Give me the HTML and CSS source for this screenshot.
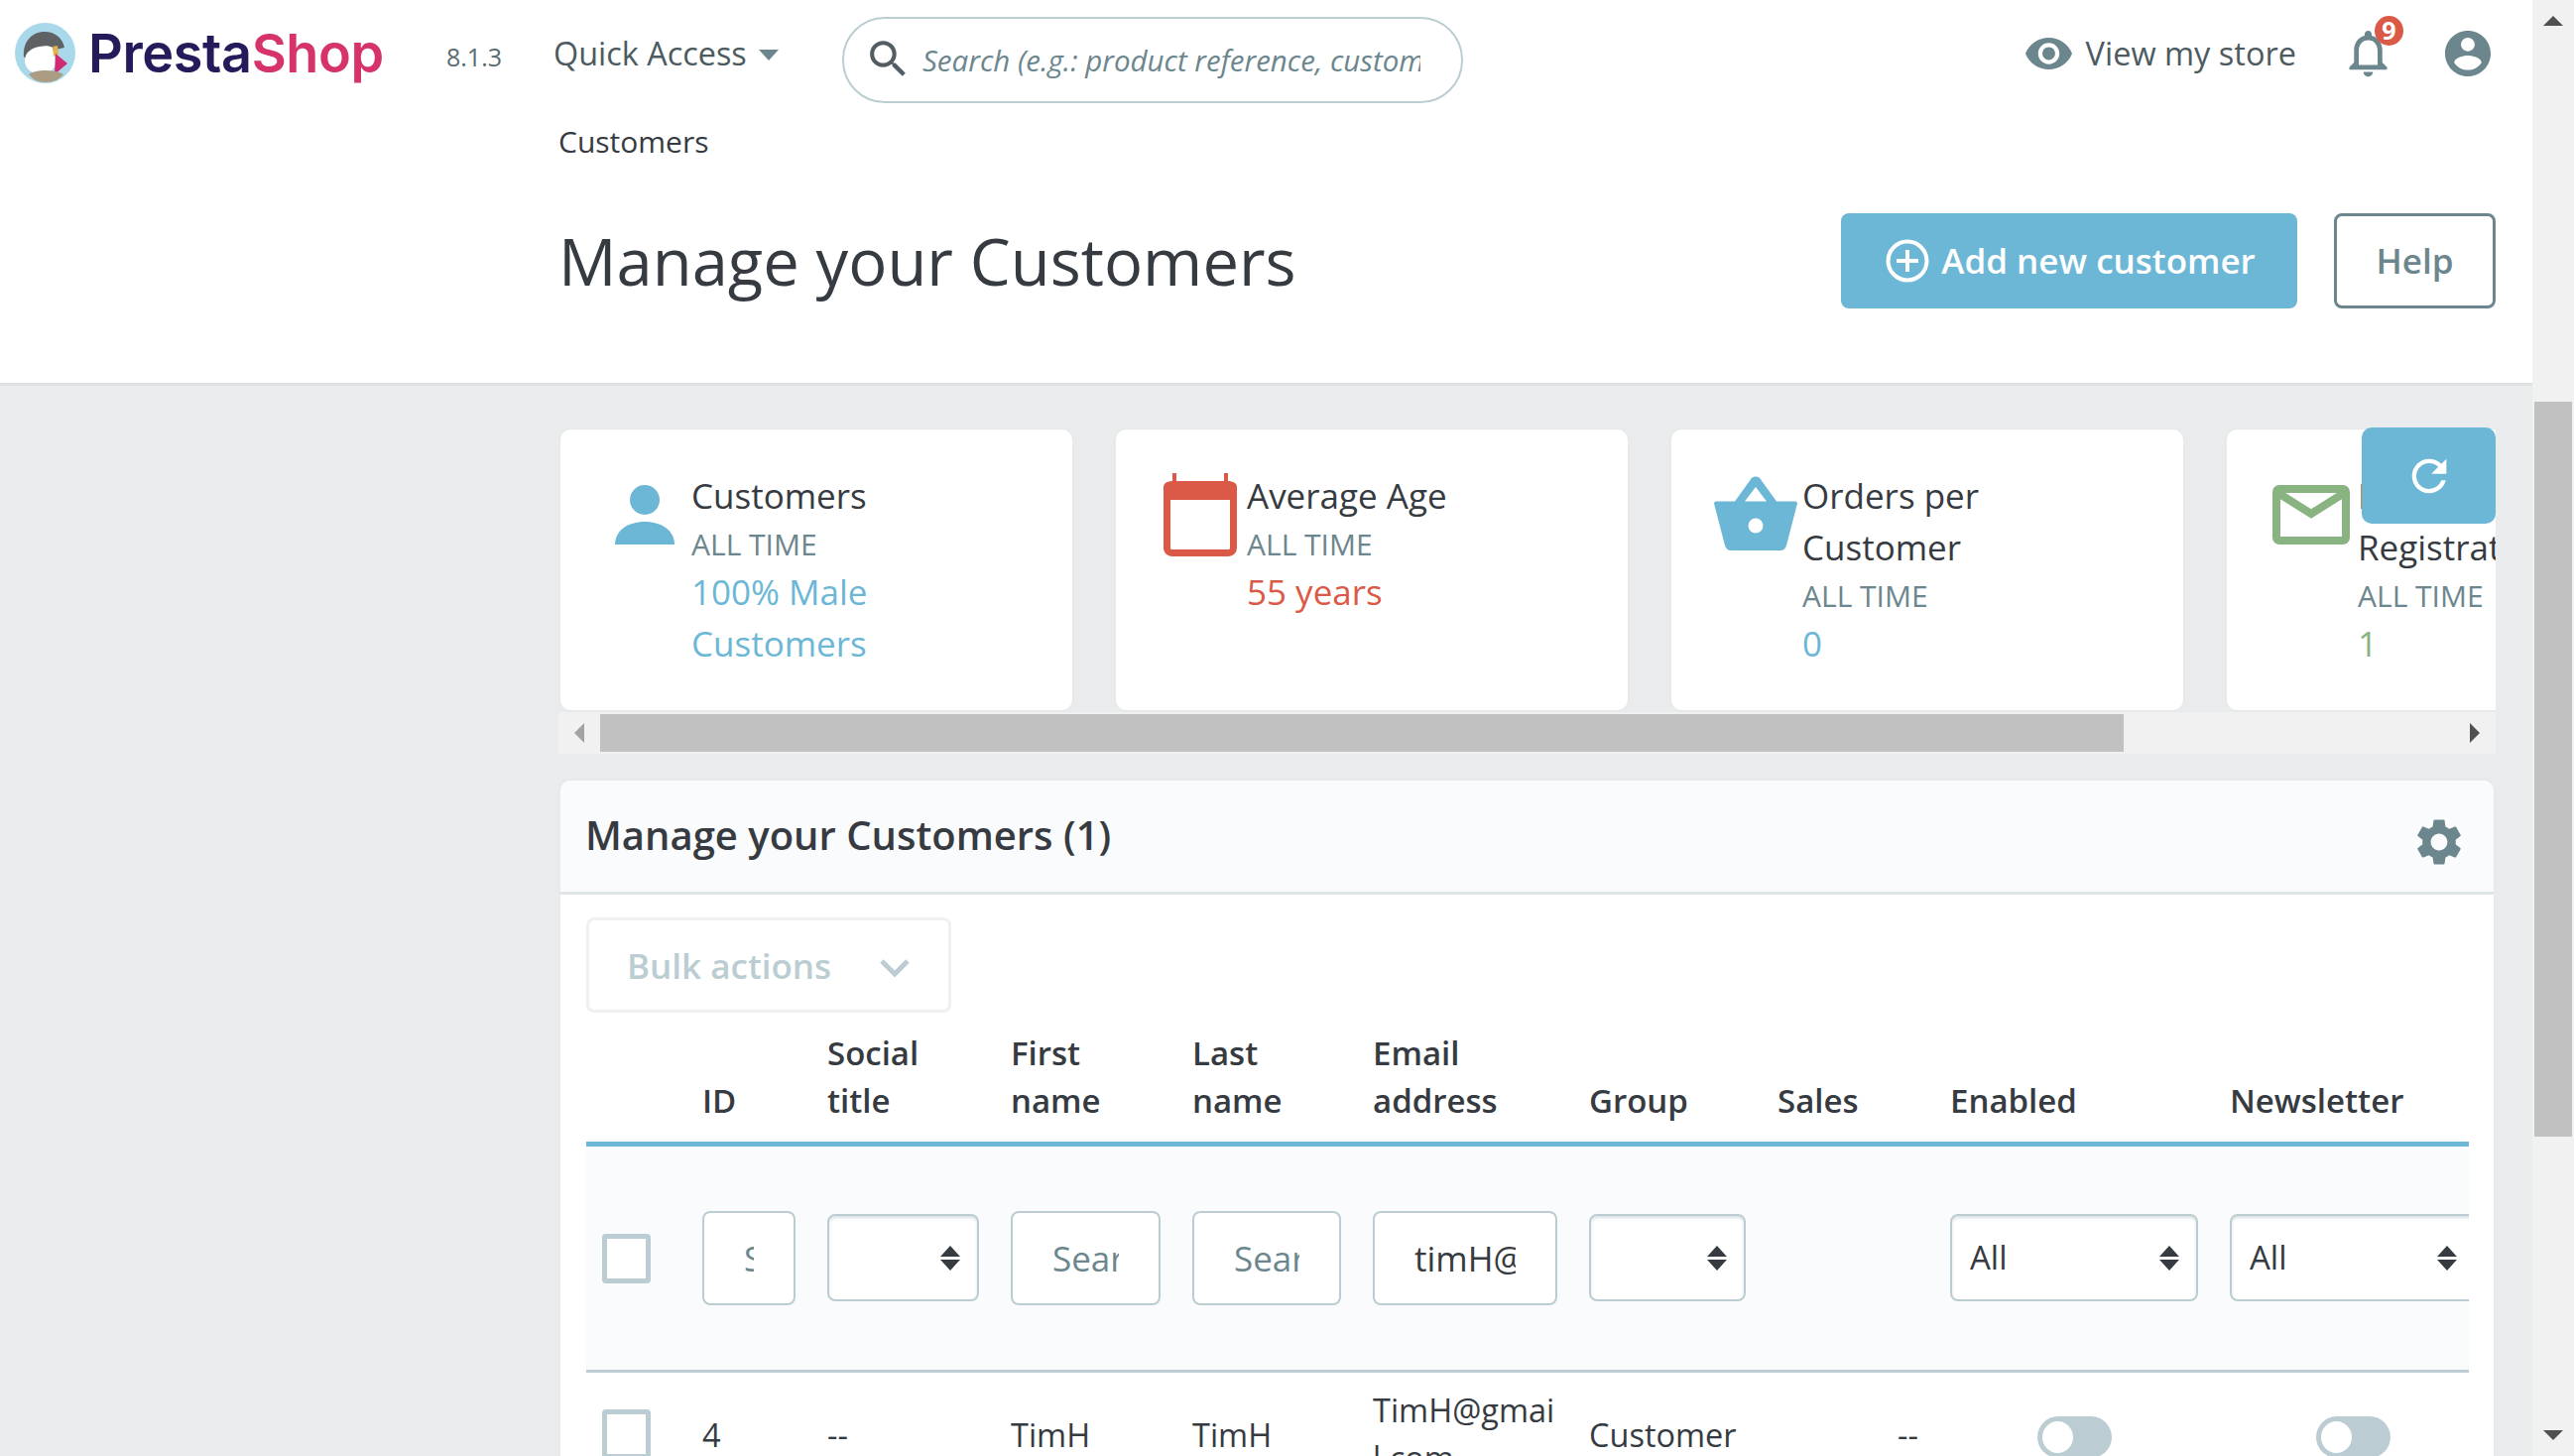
FILE: index.html
```html
<!DOCTYPE html>
<html lang="en">
<head>
<meta charset="utf-8">
<title>Manage your Customers</title>
<link rel="stylesheet" href="styles.css">
</head>
<body>
<div class="page">
  <header class="head">
    <nav class="nav">
      <a class="logo">
        <svg class="puffin" viewBox="0 0 61 61">
          <circle cx="30.500" cy="30.500" r="30.500" fill="#a8d8ea"/>
          <path d="M9 34C8 19 17 9 30 9c10 0 18 6 20 16l-9 2-9 3-12 3-8 5z" fill="#5f6265"/>
          <path d="M10 38c0-8 7-13 15-14 5-1 10-1 13 1l2 8 1 9c-3 7-8 10-14 10-10 0-17-6-17-14z" fill="#fff"/>
          <path d="M38 24l5-1 1 9-5 2z" fill="#e3b04a"/>
          <path d="M41 31l12 10-13 11z" fill="#d12a73"/>
          <path d="M14 52c4-3 10-4 17-4s13 1 18 4c-4 5-10 8-18 8s-13-3-17-8z" fill="#ab9d84"/>
        </svg>
        <span class="logo-text"><span class="presta">Presta</span><span class="shop">Shop</span></span>
      </a>
      <span class="version">8.1.3</span>
      <a class="quick">Quick Access<span class="caret"></span></a>
      <div class="search">
        <svg class="search-icon" viewBox="0 0 24 24"><path d="M15.500 14h-.79l-.28-.27A6.471 6.471 0 0 0 16 9.500 6.500 6.500 0 1 0 9.500 16c1.610 0 3.090-.59 4.230-1.570l.27.28v.79l5 4.990L20.490 19l-4.990-5zm-6 0C7.010 14 5 11.990 5 9.500S7.010 5 9.500 5 14 7.010 14 9.500 11.990 14 9.500 14z"/></svg>
        <input class="search-input" type="text" placeholder="Search (e.g.: product reference, customer name…)">
      </div>
      <div class="nav-right">
        <a class="store">
          <svg class="eye" viewBox="1 4.500 22 15" preserveAspectRatio="none"><path d="M12 4.500C7 4.500 2.730 7.610 1 12c1.730 4.390 6 7.500 11 7.500s9.270-3.110 11-7.500c-1.730-4.390-6-7.500-11-7.500zM12 17c-2.760 0-5-2.240-5-5s2.240-5 5-5 5 2.240 5 5-2.240 5-5 5zm0-8c-1.660 0-3 1.340-3 3s1.340 3 3 3 3-1.340 3-3-1.340-3-3-3z"/></svg>
          View my store
        </a>
        <div class="bell">
          <svg class="bell-icon" viewBox="0 0 24 24"><path d="M12 22c1.100 0 2-.9 2-2h-4c0 1.100.89 2 2 2zm6-6v-5c0-3.070-1.640-5.640-4.500-6.320V4c0-.83-.67-1.500-1.500-1.500s-1.500.67-1.500 1.500v.68C7.630 5.360 6 7.920 6 11v5l-2 2v1h16v-1l-2-2zm-2 1H8v-6c0-2.480 1.510-4.500 4-4.500s4 2.020 4 4.500v6z"/></svg>
          <span class="badge">9</span>
        </div>
        <svg class="user-icon" viewBox="2 2 20 20"><path d="M12 2C6.480 2 2 6.480 2 12s4.480 10 10 10 10-4.480 10-10S17.520 2 12 2zm0 3c1.660 0 3 1.340 3 3s-1.340 3-3 3-3-1.340-3-3 1.340-3 3-3zm0 14.200c-2.500 0-4.710-1.280-6-3.220.03-1.990 4-3.080 6-3.080 1.990 0 5.970 1.090 6 3.080-1.290 1.940-3.500 3.220-6 3.220z"/></svg>
      </div>
    </nav>
    <div class="crumb">Customers</div>
    <div class="title-row">
      <h1 class="title">Manage your Customers</h1>
      <div class="actions">
        <a class="btn btn-add">
          <svg class="plus" viewBox="0 0 44 44"><circle cx="22" cy="22" r="19.500" fill="none" stroke="#fff" stroke-width="4"/><path d="M22 11v22M11 22h22" stroke="#fff" stroke-width="4"/></svg>
          Add new customer
        </a>
        <a class="btn btn-help">Help</a>
      </div>
    </div>
  </header>

  <main class="main">
    <section class="stats">
      <div class="cards">
        <article class="card">
          <svg class="card-icon" viewBox="0 0 84 84"><ellipse cx="42" cy="27" rx="15" ry="15" fill="#6cb7d6"/><path d="M12 72c0-14 13-23 30-23s30 9 30 23z" fill="#6cb7d6"/></svg>
          <div class="card-text">
            <div class="card-title">Customers</div>
            <div class="card-sub">ALL TIME</div>
            <div class="card-val blue">100% Male Customers</div>
          </div>
        </article>
        <article class="card">
          <svg class="card-icon" viewBox="0 0 84 84"><path d="M14 0h4v9h-4zM66 0h4v9h-4z" fill="#da5a47"/><rect x="8.500" y="11.500" width="67" height="69" rx="5" fill="#fff" stroke="#da5a47" stroke-width="7"/><path d="M10 9h64a5 5 0 0 1 5 5v13H5V14a5 5 0 0 1 5-5z" fill="#da5a47"/></svg>
          <div class="card-text">
            <div class="card-title">Average Age</div>
            <div class="card-sub">ALL TIME</div>
            <div class="card-val red">55 years</div>
          </div>
        </article>
        <article class="card">
          <svg class="card-icon" viewBox="0 0 84 84"><path d="M0 30.500c0-1 1-2 2-2h19L36.500 7a6 6 0 0 1 11 0L63 28.500h19c1 0 2 1 2 2L73 73c-1 3-3 5-6 5H17c-3 0-5-2-6-5zM42 14 31 28.500h22z" fill="#6cb7d6"/><circle cx="42" cy="53" r="7.500" fill="#fff"/></svg>
          <div class="card-text">
            <div class="card-title">Orders per Customer</div>
            <div class="card-sub">ALL TIME</div>
            <div class="card-val blue">0</div>
          </div>
        </article>
        <article class="card">
          <svg class="card-icon" viewBox="0 0 84 84"><rect x="7" y="16" width="70" height="52" rx="3" fill="#fff" stroke="#89b481" stroke-width="8"/><path d="M7 19l35 22 35-22" fill="none" stroke="#89b481" stroke-width="8"/></svg>
          <div class="card-text">
            <div class="card-title">Newsletter Registrations</div>
            <div class="card-sub">ALL TIME</div>
            <div class="card-val green">1</div>
          </div>
        </article>
      </div>
      <div class="hbar">
        <span class="hbar-end"><span class="tri-left"></span></span>
        <span class="hbar-thumb"></span>
        <span class="hbar-end end-right"><span class="tri-right"></span></span>
      </div>
      <button class="refresh">
        <svg viewBox="0 0 24 24"><path d="M17.650 6.350A7.958 7.958 0 0 0 12 4c-4.420 0-7.990 3.580-7.990 8s3.570 8 7.990 8c3.730 0 6.840-2.550 7.730-6h-2.080A5.990 5.990 0 0 1 12 18c-3.310 0-6-2.690-6-6s2.690-6 6-6c1.660 0 3.140.69 4.220 1.780L13 11h7V4l-2.350 2.350z"/></svg>
      </button>
    </section>

    <section class="panel">
      <div class="panel-head">
        <h2 class="panel-title">Manage your Customers (1)</h2>
        <svg class="gear" viewBox="0 0 24 24"><path d="M19.140 12.940c.04-.3.06-.61.06-.94 0-.32-.02-.64-.07-.94l2.030-1.580a.49.49 0 0 0 .12-.61l-1.920-3.320a.488.488 0 0 0-.59-.22l-2.390.96c-.5-.38-1.030-.7-1.620-.94l-.36-2.540a.484.484 0 0 0-.48-.41h-3.840c-.24 0-.43.17-.47.41l-.36 2.540c-.59.24-1.130.57-1.620.94l-2.390-.96c-.22-.08-.47 0-.59.22L2.740 8.870c-.12.21-.08.47.12.61l2.030 1.580c-.05.3-.09.63-.09.94s.02.64.07.94l-2.030 1.580a.49.49 0 0 0-.12.61l1.920 3.320c.12.22.37.29.59.22l2.390-.96c.5.38 1.030.7 1.620.94l.36 2.540c.05.24.24.41.48.41h3.840c.24 0 .44-.17.47-.41l.36-2.540c.59-.24 1.130-.56 1.620-.94l2.390.96c.22.08.47 0 .59-.22l1.920-3.320c.12-.22.07-.47-.12-.61l-2.010-1.580zM12 15.600c-1.980 0-3.600-1.620-3.600-3.600s1.620-3.600 3.600-3.600 3.600 1.620 3.600 3.600-1.620 3.600-3.600 3.600z"/></svg>
      </div>
      <div class="panel-body">
        <button class="bulk">Bulk actions
          <svg class="chev" viewBox="0 0 32 20"><path d="M3 3l13 13L29 3" fill="none" stroke="#bbcdd2" stroke-width="5"/></svg>
        </button>
        <div class="table-clip">
          <table class="grid">
            <colgroup>
              <col class="c-check"><col class="c-id"><col class="c-social"><col class="c-first"><col class="c-last"><col class="c-email"><col class="c-group"><col class="c-sales"><col class="c-enabled"><col class="c-news">
            </colgroup>
            <thead>
              <tr>
                <th></th><th>ID</th><th>Social title</th><th>First name</th><th>Last name</th><th>Email address</th><th>Group</th><th>Sales</th><th>Enabled</th><th>Newsletter</th>
              </tr>
            </thead>
            <tbody>
              <tr class="filters">
                <td><span class="check"></span></td>
                <td><input class="field" type="text" placeholder="Search ID"></td>
                <td><span class="sel"><select class="select"><option></option></select></span></td>
                <td><input class="field" type="text" placeholder="Search first name"></td>
                <td><input class="field" type="text" placeholder="Search last name"></td>
                <td><input class="field" type="text" value="timH@gmail.com"></td>
                <td><span class="sel"><select class="select"><option></option></select></span></td>
                <td></td>
                <td><span class="sel"><select class="select"><option>All</option></select></span></td>
                <td><span class="sel"><select class="select"><option>All</option></select></span></td>
              </tr>
              <tr class="row">
                <td><span class="check"></span></td>
                <td>4</td>
                <td>--</td>
                <td>TimH</td>
                <td>TimH</td>
                <td class="email">TimH@gmail.com</td>
                <td>Customer</td>
                <td class="right">--</td>
                <td class="center"><span class="toggle"><span class="knob"></span></span></td>
                <td class="center"><span class="toggle"><span class="knob"></span></span></td>
              </tr>
            </tbody>
          </table>
        </div>
      </div>
    </section>
  </main>
</div>
<aside class="vbar">
  <span class="vbar-end"><span class="tri-up"></span></span>
  <span class="vbar-gap"></span>
  <span class="vbar-thumb"></span>
  <span class="vbar-rest"></span>
  <span class="vbar-end"><span class="tri-down"></span></span>
</aside>
</body>
</html>
```
FILE: styles.css
```css
* { box-sizing: border-box; }
html, body { height: 100%; }
body {
  margin: 0;
  display: flex;
  overflow: hidden;
  font-family: "Open Sans", "Noto Sans", sans-serif;
  color: #363a41;
  background: #e9ebec;
}
.page { flex: 1; min-width: 0; height: 100vh; overflow: hidden; }

/* Header */
.head { height: 389px; background: #fff; border-bottom: 3px solid #dfe2e4; }
.nav { display: flex; align-items: center; height: 107px; padding: 0 42px 0 15px; }
.logo { display: flex; align-items: center; width: 370px; filter: blur(.6px); }
.puffin { width: 61px; height: 61px; flex: none; }
.logo-text { margin-left: 13px; font-family: Inter, sans-serif; font-weight: 600; font-size: 54px; letter-spacing: -.4px; line-height: 61px; }
.presta { color: #251b5b; }
.shop { color: #d6336c; }
.version { margin-left: 65px; font-size: 25px; width: 108px; padding-top: 6px; color: #5a6b70; }
.quick { display: flex; align-items: center; font-size: 32.400px; color: #4d5a60; width: 291px; margin-top: -2px; }
.caret { margin-left: 12px; margin-top: 5px; border: 10.500px solid transparent; border-top: 11px solid #6c868e; border-bottom: 0; }
.search { display: flex; align-items: center; width: 626px; height: 87px; padding-left: 20px; border: 2px solid #bbcdd2; border-radius: 43px; margin-top: 14px; }
.search-icon { width: 49px; height: 49px; fill: #525c62; flex: none; margin-top: -2px; }
.search-input { flex: 1; min-width: 0; margin: 0 41px 0 10px; border: 0; outline: 0; padding: 0; font: italic 400 29.500px "Open Sans", sans-serif; background: transparent; }
.search-input::placeholder { color: #6c868e; opacity: 1; }
.nav-right { display: flex; align-items: center; margin-left: auto; }
.store { display: flex; align-items: center; font-size: 32.500px; color: #4d5a60; }
.eye { width: 47px; height: 32px; fill: #6c868e; margin-right: 14px; }
.bell { position: relative; width: 57px; height: 57px; margin-left: 44px; }
.bell-icon { width: 57px; height: 57px; fill: #6c868e; }
.badge { position: absolute; left: 35px; top: -9px; width: 29px; height: 30px; border-radius: 50%; background: #da5a47; color: #fff; font-size: 25px; font-weight: 700; line-height: 29px; text-align: center; }
.user-icon { width: 46px; height: 46px; fill: #6c868e; margin-left: 49px; }
.crumb { height: 46px; padding-left: 563px; margin-top: 13px; font-size: 30px; line-height: 46px; }
.title-row { display: flex; justify-content: space-between; align-items: center; padding: 0 37px 0 563px; margin-top: 49px; height: 96px; }
.title { margin: 0; font-size: 65.100px; font-weight: 400; line-height: 96px; color: #363a41; }
.actions { display: flex; gap: 37px; }
.btn { display: flex; align-items: center; justify-content: center; height: 96px; border-radius: 8px; font-size: 35px; font-weight: 600; padding-bottom: 2px; }
.btn-add { width: 460px; background: #6cb7d6; color: #fff; gap: 12px; padding-left: 3px; }
.plus { width: 44px; height: 44px; margin-top: 2px; }
.btn-help { width: 163px; border: 3px solid #6c868e; color: #6c868e; }

/* Main */
.main { padding: 42px 37px 0 563px; }
.stats { position: relative; }
.cards { display: flex; gap: 44px; padding: 2px 0 2px 2px; overflow: hidden; }
.card { flex: none; display: flex; width: 516px; height: 283px; padding: 41px 0 0 43px; background: #fff; border-radius: 10px; box-shadow: 0 0 3px #dfe4e6; }
.card-icon { flex: none; width: 84px; height: 84px; margin: 3px 5px 0 0; }
.card-text { width: 222px; font-size: 35px; line-height: 52px; }
.card-title { color: #363a41; }
.card-sub { color: #6c868e; font-size: 30px; line-height: 46px; margin-bottom: -1px; }
.card-val { line-height: 52px; }
.blue { color: #6cb7d6; }
.red { color: #da5a47; }
.green { color: #89b481; }
.hbar { display: flex; height: 42px; background: #f1f1f1; padding: 2px 0 2px; }
.hbar-end { display: flex; align-items: center; width: 42px; padding-left: 16px; }
.end-right { width: auto; flex: 1; justify-content: flex-end; padding: 0 16px 0 0; }
.hbar-thumb { width: 1536px; background: #c1c1c1; }
.tri-left { border: 10px solid transparent; border-left: 0; border-right: 10px solid #a3a3a3; }
.tri-right { border: 10px solid transparent; border-right: 0; border-left: 10px solid #505050; }
.refresh { position: absolute; top: 0; right: 0; display: flex; align-items: center; justify-content: center; width: 135px; height: 97px; padding: 0; border: 0; border-radius: 10px; background: #6cb7d6; }
.refresh svg { width: 52px; height: 52px; fill: #fff; }

/* Panel */
.panel { margin: 27px 2px 0; background: #fff; border-radius: 10px 10px 0 0; box-shadow: 0 0 3px #dfe4e6; }
.panel-head { display: flex; align-items: center; justify-content: space-between; height: 115px; padding: 0 26px 0 25px; background: #fafbfc; border-bottom: 3px solid #dfe4e6; border-radius: 10px 10px 0 0; }
.panel-title { margin: 0; font-size: 40px; font-weight: 600; line-height: 54px; color: #363a41; margin-top: -2px; }
.gear { width: 56px; height: 56px; fill: #6c868e; margin-top: 12px; margin-right: 1px; }
.panel-body { padding: 23px 25px 0 26px; }
.bulk { display: flex; align-items: center; justify-content: space-between; width: 368px; height: 96px; padding: 0 38px 0 38px; background: #fff; border: 3px solid #eef0f1; border-radius: 8px; color: #bbcdd2; font: 600 35px "Open Sans", sans-serif; }
.chev { width: 32px; height: 20px; margin-top: 6px; }
.table-clip { overflow: hidden; margin-top: 17px; }
.grid { width: 1921px; table-layout: fixed; border-collapse: collapse; font-size: 32.500px; }
.c-check { width: 101px; } .c-id { width: 126px; } .c-social { width: 185px; } .c-first { width: 183px; } .c-last { width: 182px; }
.c-email { width: 218px; } .c-group { width: 190px; } .c-sales { width: 174px; } .c-enabled { width: 282px; } .c-news { width: 280px; }
th { padding: 0 16px 17px; font-size: 33px; font-weight: 600; line-height: 48px; text-align: left; vertical-align: bottom; border-bottom: 5px solid #6cb7d6; }
td { padding: 0 16px; vertical-align: middle; }
.filters { height: 229px; background: #fafbfc; border-bottom: 3px solid #bbcdd2; }
.row { height: 126px; }
.check { display: block; width: 49px; height: 50px; background: #fff; border: 5px solid #bbcdd2; border-radius: 4px; }
.field { display: block; width: 100%; height: 95px; padding: 0 40px; background: #fff; border: 2px solid #bbcdd2; border-radius: 8px; font: 400 35px "Open Sans", sans-serif; color: #363a41; outline: 0; }
.field::placeholder { color: #6c868e; opacity: 1; }
.sel { position: relative; display: block; margin-top: -2px; }
.sel::before, .sel::after { content: ""; position: absolute; right: 19px; border: 10px solid transparent; pointer-events: none; }
.sel::before { top: 32px; border-top: 0; border-bottom: 11px solid #363a41; }
.sel::after { top: 46px; border-bottom: 0; border-top: 11px solid #363a41; }
.select { display: block; width: 100%; height: 88px; padding: 0 50px 0 18px; appearance: none; background: #fff; border: 2px solid #bbcdd2; border-radius: 8px; box-shadow: inset 0 2px 3px rgba(108,134,142,.25); font: 400 33px "Open Sans", sans-serif; color: #363a41; outline: 0; }
.email { word-break: break-all; line-height: 48px; }
.right { text-align: right; }
.center { text-align: center; }
.toggle { display: inline-block; width: 75px; height: 42px; padding: 5px; background: #bbcdd2; border-radius: 21px; vertical-align: middle; }
.knob { display: block; width: 31px; height: 32px; background: #fff; border-radius: 50%; }

/* Window scrollbar */
.vbar { flex: none; display: flex; flex-direction: column; width: 42px; height: 100vh; background: #f1f1f1; }
.vbar-end { flex: none; display: flex; align-items: center; justify-content: center; height: 42px; }
.vbar-gap { flex: none; height: 363px; }
.vbar-thumb { flex: none; height: 741px; margin: 0 2px; background: #c1c1c1; }
.vbar-rest { flex: 1; }
.tri-up { border: 10px solid transparent; border-top: 0; border-bottom: 10px solid #505050; }
.tri-down { border: 10px solid transparent; border-bottom: 0; border-top: 10px solid #505050; }
```
